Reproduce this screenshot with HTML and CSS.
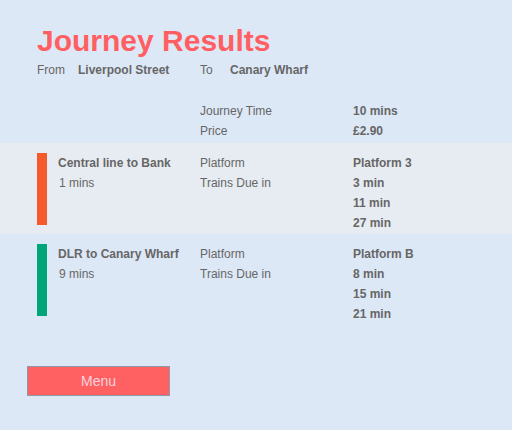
FILE: index.html
```html
<!DOCTYPE html>
<html lang="en">
<head>
<meta charset="utf-8">
<title>Journey Results</title>
<link rel="stylesheet" href="styles.css">
</head>
<body>
<div class="page">
  <header class="head">
    <h1 class="title">Journey Results</h1>
    <div class="route">
      <span class="route-label route-from">From</span>
      <span class="route-stop route-start">Liverpool Street</span>
      <span class="route-label route-to">To</span>
      <span class="route-stop">Canary Wharf</span>
    </div>
  </header>

  <div class="summary">
    <div class="labels">
      <div>Journey Time</div>
      <div>Price</div>
    </div>
    <div class="values">
      <div>10 mins</div>
      <div>£2.90</div>
    </div>
  </div>

  <section class="leg leg-shaded">
    <div class="bar bar-central"></div>
    <div class="leg-info">
      <div class="leg-name">Central line to Bank</div>
      <div class="leg-time">1 mins</div>
    </div>
    <div class="labels">
      <div>Platform</div>
      <div>Trains Due in</div>
    </div>
    <div class="values">
      <div>Platform 3</div>
      <div>3 min</div>
      <div>11 min</div>
      <div>27 min</div>
    </div>
  </section>

  <section class="leg">
    <div class="bar bar-dlr"></div>
    <div class="leg-info">
      <div class="leg-name">DLR to Canary Wharf</div>
      <div class="leg-time">9 mins</div>
    </div>
    <div class="labels">
      <div>Platform</div>
      <div>Trains Due in</div>
    </div>
    <div class="values">
      <div>Platform B</div>
      <div>8 min</div>
      <div>15 min</div>
      <div>21 min</div>
    </div>
  </section>

  <div class="actions">
    <button class="menu" type="button">Menu</button>
  </div>
</div>
</body>
</html>
```

FILE: styles.css
```css
html, body {
  margin: 0;
  padding: 0;
}

body {
  background: #dde8f6;
  font-family: "Liberation Sans", Arial, sans-serif;
  font-size: 12px;
  color: #666666;
}

.page {
  padding-top: 24px;
}

.head {
  padding-left: 37px;
}

.title {
  margin: 0;
  font-size: 30px;
  line-height: 34px;
  font-weight: bold;
  color: #ff5f62;
}

.route {
  display: flex;
  margin-top: 2px;
  line-height: 20px;
}

.route-from {
  width: 41px;
}

.route-start {
  width: 122px;
}

.route-to {
  width: 30px;
}

.route-stop {
  font-weight: bold;
}

.summary {
  display: grid;
  grid-template-columns: 153px 1fr;
  margin-top: 21px;
  margin-bottom: 2px;
  padding-left: 200px;
  line-height: 20px;
}

.values {
  font-weight: bold;
}

.leg {
  display: grid;
  grid-template-columns: 21px 142px 153px 1fr;
  align-items: start;
  padding: 10px 0 1px 37px;
  line-height: 20px;
}

.leg-shaded {
  background: #e6ecf2;
}

.bar {
  width: 10px;
  height: 72px;
}

.bar-central {
  background: #f55a2c;
}

.bar-dlr {
  background: #00a67a;
}

.leg-name {
  font-weight: bold;
}

.leg-time {
  padding-left: 1px;
}

.actions {
  padding: 41px 0 0 27px;
}

.menu {
  display: block;
  width: 143px;
  height: 30px;
  margin: 0;
  padding: 0;
  background: #ff6163;
  border: 1px solid #8b99ad;
  color: #f6d3dc;
  font-family: "Liberation Sans", Arial, sans-serif;
  font-size: 14px;
  line-height: 28px;
}
```
